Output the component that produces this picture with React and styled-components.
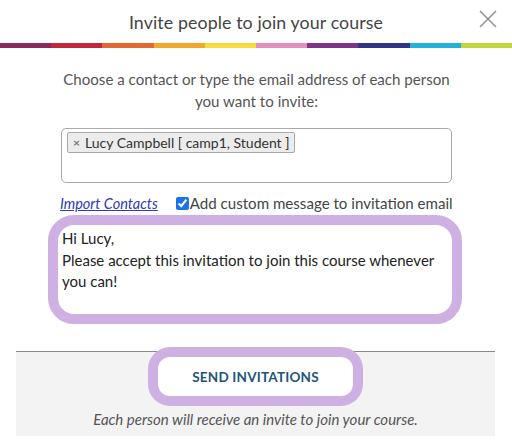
import React from "react";
import styled, { createGlobalStyle } from "styled-components";

const Global = createGlobalStyle`
  html, body { margin: 0; padding: 0; background: #fff; }
  body { font-family: "Lato", "Open Sans", sans-serif; width: 512px; }
`;

const Page = styled.div`
  width: 512px;
  height: 443px;
  display: flex;
  flex-direction: column;
  background: #fff;
  overflow: hidden;
  & > * { flex-shrink: 0; }
`;

const Header = styled.header`
  height: 43px;
  display: flex;
  align-items: center;
  justify-content: center;
  position: relative;
`;

const Title = styled.h1`
  margin: 0;
  font-size: 17.8px;
  font-weight: 400;
  color: #444;
  letter-spacing: 0.1px;
`;

const Close = styled.button`
  position: absolute;
  right: 15px;
  top: 10px;
  width: 18px;
  height: 18px;
  padding: 0;
  border: 0;
  background: none;
  display: flex;
`;

const Stripe = styled.div`
  display: flex;
  height: 5px;
`;

const Segment = styled.span`
  flex: 1;
  background: ${(p) => p.$c};
`;

const Body = styled.div`
  display: flex;
  flex-direction: column;
  padding: 0 60px 0 61px;
  & > * { flex-shrink: 0; }
`;

const Intro = styled.p`
  margin: 20px 0 0;
  text-align: center;
  font-size: 15.1px;
  line-height: 22px;
  color: #555;
`;

const Recipients = styled.div`
  margin-top: 16px;
  height: 55px;
  box-sizing: border-box;
  border: 1px solid #aaa;
  border-radius: 5px;
  padding: 3px 5px;
  display: flex;
  align-items: flex-start;
`;

const Tag = styled.span`
  display: inline-flex;
  align-items: center;
  gap: 5px;
  height: 21px;
  box-sizing: border-box;
  padding: 0 4px 0 5px;
  background: #ececec;
  border: 1px solid #aaa;
  border-radius: 2px;
  font-size: 14px;
  color: #333;
`;

const TagX = styled.span`
  font-size: 12px;
  font-weight: 700;
  color: #777;
`;

const Options = styled.div`
  display: flex;
  align-items: center;
  margin: 11px -10px 0 -1px;
  gap: 18px;
  font-size: 14.5px;
  color: #444;
  white-space: nowrap;
  height: 18px;
`;

const Link = styled.a`
  font-style: italic;
  color: #2c3bb8;
  text-decoration: underline;
`;

const Check = styled.label`
  display: flex;
  align-items: center;
  gap: 1px;
  font-size: 15.1px;
  input {
    margin: 0;
    width: 13px;
    height: 13px;
    accent-color: #1a73e8;
  }
`;

const MessageWrap = styled.div`
  margin: 3px -10px 0 -13px;
  height: 109px;
  box-sizing: border-box;
  border: 10px solid #cfb0e3;
  border-radius: 26px;
  padding: 3px 4px;
  font-size: 15px;
  line-height: 21.5px;
  color: #222;
`;

const Footer = styled.footer`
  margin: 27px 17px 0 16px;
  background: #f3f3f3;
  border-top: 1px solid #8a8a8a;
  display: flex;
  flex-direction: column;
  align-items: center;
  padding: 5px 0 8px;
`;

const SendButton = styled.button`
  width: 195px;
  height: 39px;
  background: #fff;
  border: 0;
  border-radius: 12px;
  box-shadow: 0 0 0 10px #cfb0e3;
  font-family: "Lato", sans-serif;
  font-size: 13.5px;
  font-weight: 700;
  color: #1f5577;
  letter-spacing: 0.2px;
`;

const Note = styled.p`
  margin: 14px 0 0;
  font-size: 15px;
  font-style: italic;
  color: #555;
  line-height: 18px;
`;

const colors = [
  "#8a2a5c",
  "#c1273d",
  "#e06a30",
  "#f2a92e",
  "#f7dc3e",
  "#e58fc0",
  "#7d3484",
  "#2e3488",
  "#22b2dc",
  "#c3d43c",
];

export default function App() {
  return (
    <>
      <Global />
      <Page>
        <Header>
          <Title>Invite people to join your course</Title>
          <Close aria-label="Close">
            <svg width="18" height="18" viewBox="0 0 18 18">
              <path d="M1 1 L17 17 M17 1 L1 17" stroke="#8a8a8a" strokeWidth="1.4" fill="none" />
            </svg>
          </Close>
        </Header>
        <Stripe>
          {colors.map((c) => (
            <Segment key={c} $c={c} />
          ))}
        </Stripe>
        <Body>
          <Intro>
            Choose a contact or type the email address of each person
            <br />
            you want to invite:
          </Intro>
          <Recipients>
            <Tag>
              <TagX>×</TagX>Lucy Campbell [ camp1, Student ]
            </Tag>
          </Recipients>
          <Options>
            <Link href="#">Import Contacts</Link>
            <Check>
              <input type="checkbox" defaultChecked />
              Add custom message to invitation email
            </Check>
          </Options>
          <MessageWrap>
            Hi Lucy,
            <br />
            Please accept this invitation to join this course whenever you can!
          </MessageWrap>
        </Body>
        <Footer>
          <SendButton>SEND INVITATIONS</SendButton>
          <Note>Each person will receive an invite to join your course.</Note>
        </Footer>
      </Page>
    </>
  );
}
